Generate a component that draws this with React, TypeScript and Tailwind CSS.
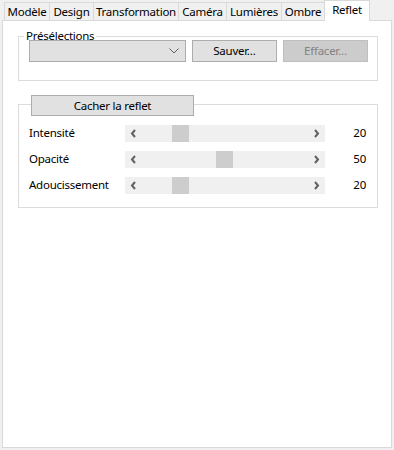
import React from "react";

const tabs = [
  { label: "Modèle", w: 45 },
  { label: "Design", w: 44 },
  { label: "Transformation", w: 85 },
  { label: "Caméra", w: 48 },
  { label: "Lumières", w: 55 },
  { label: "Ombre", w: 43 },
];

function Slider({ label, value }: { label: string; value: number }) {
  const left = 17 + (148 * value) / 100;
  return (
    <div className="flex items-center h-[17px]">
      <div className="w-[96px] leading-[17px] pb-[3px] text-black">{label}</div>
      <div className="relative w-[200px] h-[17px] bg-[#f0f0f0] flex items-center justify-between">
        <svg width="17" height="17" viewBox="0 0 17 17" className="shrink-0">
          <path d="M10 5 L7 8.5 L10 12" stroke="#606060" strokeWidth="2" fill="none" />
        </svg>
        <div className="absolute top-0 h-[17px] w-[17px] bg-[#cdcdcd]" style={{ left }} />
        <svg width="17" height="17" viewBox="0 0 17 17" className="shrink-0">
          <path d="M7 5 L10 8.5 L7 12" stroke="#606060" strokeWidth="2" fill="none" />
        </svg>
      </div>
      <div className="w-[41px] text-right leading-[17px] pb-[3px] text-black">{value}</div>
    </div>
  );
}

export default function App() {
  return (
    <div
      className="w-[394px] h-[450px] bg-[#f0f0f0] text-[11.5px] tracking-[-0.25px] text-black"
      style={{ fontFamily: '"Noto Sans", "Open Sans", sans-serif' }}
    >
      <div className="flex items-start h-[20px] pl-[4px]">
        {tabs.map((t) => (
          <div
            key={t.label}
            className="mt-[2px] h-[18px] border-t border-l border-[#d9d9d9] bg-[#f0f0f0] flex items-center justify-center leading-[16px] whitespace-nowrap"
            style={{ width: t.w }}
          >
            {t.label}
          </div>
        ))}
        <div className="relative z-10 h-[21px] w-[46px] border border-b-0 border-[#d9d9d9] bg-white flex items-center justify-center leading-[16px] pb-[2px]">
          Reflet
        </div>
      </div>
      <div className="mx-[2px] h-[428px] border border-[#d9d9d9] bg-white pt-[15px] pl-[15px]">
        {/* Présélections group */}
        <div className="w-[360px] h-[45px] border border-[#dcdcdc] flex flex-col">
          <div className="-mt-[9px] ml-[5px] self-start bg-white px-[2px] leading-[16px]">Présélections</div>
          <div className="flex gap-[6px] pl-[10px] mt-[-4px]">
            <div className="w-[157px] h-[22px] bg-[#e1e1e1] border border-[#adadad] flex items-center justify-end pr-[6px]">
              <svg width="10" height="6" viewBox="0 0 10 6">
                <path d="M0.5 0.5 L5 5 L9.5 0.5" stroke="#606060" strokeWidth="1" fill="none" />
              </svg>
            </div>
            <div className="w-[85px] h-[22px] bg-[#e1e1e1] border border-[#adadad] flex items-center justify-center leading-[16px]">
              Sauver…
            </div>
            <div className="w-[85px] h-[22px] bg-[#cccccc] border border-[#bfbfbf] flex items-center justify-center leading-[16px] text-[#838383]">
              Effacer…
            </div>
          </div>
        </div>
        {/* Reflet group */}
        <div className="mt-[23px] w-[360px] h-[104px] border border-[#dcdcdc] flex flex-col">
          <div className="-mt-[10px] ml-[12px] self-start w-[163px] h-[21px] bg-[#e1e1e1] border border-[#adadad] flex items-center justify-center leading-[16px]">
            Cacher la reflet
          </div>
          <div className="mt-[9px] pl-[10px] flex flex-col gap-[9px]">
            <Slider label="Intensité" value={20} />
            <Slider label="Opacité" value={50} />
            <Slider label="Adoucissement" value={20} />
          </div>
        </div>
      </div>
    </div>
  );
}
